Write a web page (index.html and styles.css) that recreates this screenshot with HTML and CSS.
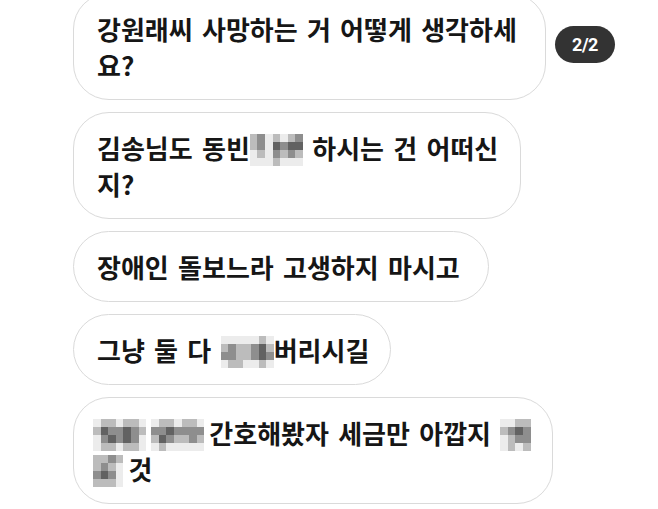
FILE: index.html
```html
<!DOCTYPE html>
<html lang="ko">
<head>
<meta charset="utf-8">
<link rel="stylesheet" href="styles.css">
</head>
<body>
<main class="chat">
  <div class="row">
    <div class="bubble w1">강원래씨 사망하는 거 어떻게 생각하세<br>요?</div>
    <div class="badge">2/2</div>
  </div>
  <div class="bubble w2">김송님도 동빈<span class="mosaic m7"><i class="c1"></i><i class="c2"></i><i class="c0"></i><i class="c1"></i><i class="c0"></i><i class="c1"></i><i class="c2"></i><i class="c1"></i><i class="c2"></i><i class="c0"></i><i class="c3"></i><i class="c2"></i><i class="c3"></i><i class="c3"></i><i class="c0"></i><i class="c1"></i><i class="c0"></i><i class="c2"></i><i class="c1"></i><i class="c2"></i><i class="c1"></i><i class="c0"></i><i class="c0"></i><i class="c0"></i><i class="c1"></i><i class="c0"></i><i class="c0"></i><i class="c0"></i></span> 하시는 건 어떠신<br>지?</div>
  <div class="bubble w3">장애인 돌보느라 고생하지 마시고</div>
  <div class="bubble w4">그냥 둘 다 <span class="mosaic m7"><i class="c0"></i><i class="c0"></i><i class="c0"></i><i class="c0"></i><i class="c0"></i><i class="c1"></i><i class="c0"></i><i class="c1"></i><i class="c2"></i><i class="c1"></i><i class="c1"></i><i class="c2"></i><i class="c3"></i><i class="c1"></i><i class="c2"></i><i class="c2"></i><i class="c1"></i><i class="c1"></i><i class="c2"></i><i class="c3"></i><i class="c2"></i><i class="c0"></i><i class="c1"></i><i class="c1"></i><i class="c0"></i><i class="c0"></i><i class="c1"></i><i class="c0"></i></span>버리시길</div>
  <div class="bubble w5"><span class="mosaic m7"><i class="c0"></i><i class="c1"></i><i class="c1"></i><i class="c0"></i><i class="c1"></i><i class="c1"></i><i class="c0"></i><i class="c1"></i><i class="c3"></i><i class="c2"></i><i class="c2"></i><i class="c3"></i><i class="c2"></i><i class="c1"></i><i class="c0"></i><i class="c2"></i><i class="c3"></i><i class="c2"></i><i class="c3"></i><i class="c2"></i><i class="c0"></i><i class="c0"></i><i class="c1"></i><i class="c1"></i><i class="c0"></i><i class="c1"></i><i class="c1"></i><i class="c0"></i></span><span class="gap"></span><span class="mosaic m7"><i class="c0"></i><i class="c1"></i><i class="c1"></i><i class="c0"></i><i class="c1"></i><i class="c1"></i><i class="c0"></i><i class="c2"></i><i class="c2"></i><i class="c3"></i><i class="c2"></i><i class="c2"></i><i class="c2"></i><i class="c2"></i><i class="c1"></i><i class="c3"></i><i class="c2"></i><i class="c1"></i><i class="c1"></i><i class="c2"></i><i class="c1"></i><i class="c0"></i><i class="c1"></i><i class="c0"></i><i class="c0"></i><i class="c0"></i><i class="c0"></i><i class="c0"></i></span><span class="gap"></span>간호해봤자 세금만 아깝지 <span class="mosaic m4"><i class="c0"></i><i class="c0"></i><i class="c1"></i><i class="c1"></i><i class="c1"></i><i class="c2"></i><i class="c3"></i><i class="c2"></i><i class="c0"></i><i class="c1"></i><i class="c2"></i><i class="c2"></i><i class="c0"></i><i class="c1"></i><i class="c0"></i><i class="c1"></i></span><br><span class="mosaic m4"><i class="c1"></i><i class="c1"></i><i class="c2"></i><i class="c1"></i><i class="c1"></i><i class="c2"></i><i class="c1"></i><i class="c0"></i><i class="c2"></i><i class="c3"></i><i class="c2"></i><i class="c0"></i><i class="c1"></i><i class="c1"></i><i class="c1"></i><i class="c0"></i></span><span class="gap"></span>것</div>
</main>
</body>
</html>
```

FILE: styles.css
```css
html, body {
  margin: 0;
  padding: 0;
  background: #ffffff;
}

body {
  width: 658px;
  height: 509px;
  overflow: hidden;
  font-family: "Noto Sans CJK KR", "Noto Sans", sans-serif;
}

.chat {
  display: flex;
  flex-direction: column;
  align-items: flex-start;
  gap: 12px;
  padding-left: 73px;
  margin-top: -7px;
}

.row {
  display: flex;
  align-items: center;
  gap: 9px;
}

.bubble {
  box-sizing: border-box;
  border: 1.5px solid #dadada;
  border-radius: 36px;
  padding: 17px 16px 16px 23px;
  font-size: 26px;
  line-height: 36px;
  font-weight: 700;
  word-spacing: 2px;
  color: #161616;
  white-space: nowrap;
  background: #fff;
}

.w1 { width: 473px; }
.w2 { width: 448px; }
.w3 { width: 416px; }
.w4 { width: 318px; }
.w5 { width: 480px; padding-left: 19px; }

.badge {
  width: 60px;
  height: 37px;
  margin-bottom: 5px;
  border-radius: 19px;
  background: #333333;
  color: #ffffff;
  font-family: Roboto, "Liberation Sans", sans-serif;
  font-weight: 700;
  font-size: 18px;
  letter-spacing: -0.5px;
  display: flex;
  align-items: center;
  justify-content: center;
}

.mosaic {
  display: inline-grid;
  grid-auto-rows: 8px;
  vertical-align: middle;
  word-spacing: 0;
  line-height: 0;
  margin-top: -4px;
}

.m7 { grid-template-columns: repeat(7, 7.6px); }
.m4 { grid-template-columns: repeat(4, 7.6px); }

.mosaic i { display: block; }
.c0 { background: #ececec; }
.c1 { background: #bcbcbc; }
.c2 { background: #8e8e8e; }
.c3 { background: #626262; }

.gap {
  display: inline-block;
  width: 5px;
}
```
